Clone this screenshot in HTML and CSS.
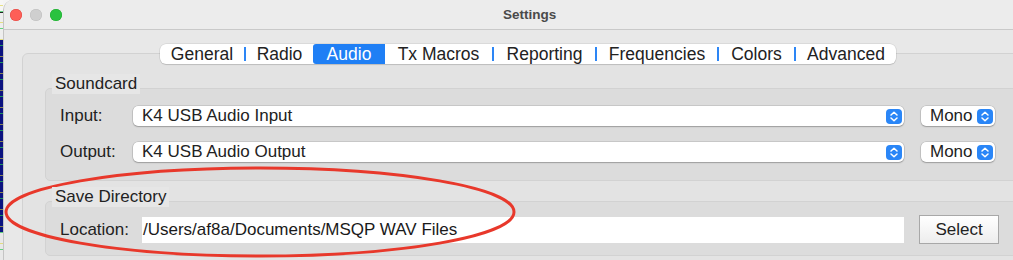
FILE: index.html
```html
<!DOCTYPE html>
<html lang="en">
<head>
  <meta charset="UTF-8">
  <title>Settings</title>
  <link rel="stylesheet" href="styles.css">
</head>
<body>
  <!-- app behind the dialog -->
  <div class="backapp"></div>

  <div class="window">
    <div class="titlebar">
      <span class="light red"></span>
      <span class="light grey"></span>
      <span class="light green"></span>
      <span class="title">Settings</span>
    </div>

    <div class="content">
      <!-- Tabs -->
      <div class="tabs">
        <div class="tab">General</div>
        <div class="tab sep">Radio</div>
        <div class="tab active">Audio</div>
        <div class="tab">Tx Macros</div>
        <div class="tab sep">Reporting</div>
        <div class="tab sep">Frequencies</div>
        <div class="tab sep">Colors</div>
        <div class="tab sep">Advanced</div>
      </div>

      <div class="pane">
        <!-- Soundcard -->
        <div class="group">
          <div class="group-title">Soundcard</div>
          <div class="group-box sound-box">
            <div class="row">
              <span class="label">Input:</span>
              <div class="combo wide">
                <span class="combo-text">K4 USB Audio Input</span>
                <span class="stepper">
                  <svg width="16" height="15" viewBox="0 0 16 15"><path d="M5 6 L8 3.2 L11 6 M5 9 L8 11.8 L11 9" fill="none" stroke="#fff" stroke-width="1.5" stroke-linecap="round" stroke-linejoin="round"/></svg>
                </span>
              </div>
              <div class="combo mono">
                <span class="combo-text">Mono</span>
                <span class="stepper">
                  <svg width="16" height="15" viewBox="0 0 16 15"><path d="M5 6 L8 3.2 L11 6 M5 9 L8 11.8 L11 9" fill="none" stroke="#fff" stroke-width="1.5" stroke-linecap="round" stroke-linejoin="round"/></svg>
                </span>
              </div>
            </div>
            <div class="row">
              <span class="label">Output:</span>
              <div class="combo wide">
                <span class="combo-text">K4 USB Audio Output</span>
                <span class="stepper">
                  <svg width="16" height="15" viewBox="0 0 16 15"><path d="M5 6 L8 3.2 L11 6 M5 9 L8 11.8 L11 9" fill="none" stroke="#fff" stroke-width="1.5" stroke-linecap="round" stroke-linejoin="round"/></svg>
                </span>
              </div>
              <div class="combo mono">
                <span class="combo-text">Mono</span>
                <span class="stepper">
                  <svg width="16" height="15" viewBox="0 0 16 15"><path d="M5 6 L8 3.2 L11 6 M5 9 L8 11.8 L11 9" fill="none" stroke="#fff" stroke-width="1.5" stroke-linecap="round" stroke-linejoin="round"/></svg>
                </span>
              </div>
            </div>
          </div>
        </div>

        <!-- Save Directory -->
        <div class="group save">
          <div class="group-title">Save Directory</div>
          <div class="group-box save-box">
            <div class="row">
              <span class="label loc">Location:</span>
              <div class="field">/Users/af8a/Documents/MSQP WAV Files</div>
              <button class="select-btn">Select</button>
            </div>
          </div>
        </div>
      </div>
    </div>
  </div>

  <!-- red annotation drawn over the screenshot -->
  <svg class="annotation" width="1013" height="260" viewBox="0 0 1013 260">
    <ellipse cx="260" cy="212" rx="254" ry="44" fill="none" stroke="#e8382b" stroke-width="3"/>
  </svg>
</body>
</html>
```

FILE: styles.css
```css
body {
  margin: 0;
  width: 1013px;
  height: 260px;
  overflow: hidden;
  display: flex;
  position: relative;
  background: #f4f4f4;
  font-family: "Liberation Sans", Arial, sans-serif;
  color: #222;
}
.backapp {
  width: 3px;
  flex: none;
  background:
    repeating-linear-gradient(to bottom, transparent 0, transparent 5px, rgba(220, 210, 60, 0.6) 5px, rgba(220, 210, 60, 0.6) 6px, transparent 6px, transparent 11px, rgba(40, 200, 80, 0.7) 11px, rgba(40, 200, 80, 0.7) 12px, transparent 12px, transparent 17px),
    linear-gradient(to bottom, #f6f6f6 0, #f6f6f6 12px, #222 12px, #222 13px, #eeeeee 13px, #eeeeee 40px, #0b1380 40px, #0b1380 232px, #e8e8e8 232px);
}
.window {
  flex: 1;
  background: #e8e8e8;
  border-left: 1px solid #c4c4c4;
  border-top-left-radius: 10px;
  overflow: hidden;
}
.titlebar {
  height: 29px;
  background: #ececec;
  border-bottom: 1px solid #c9c9c9;
  display: flex;
  align-items: center;
  padding-left: 6px;
  gap: 8px;
}
.light {
  width: 12px;
  height: 12px;
  border-radius: 50%;
}
.light.red { background: #fe5f57; box-shadow: inset 0 0 0 0.5px #e0443e; }
.light.grey { background: #cfcfcf; box-shadow: inset 0 0 0 0.5px #bdbdbd; }
.light.green { background: #29c23f; box-shadow: inset 0 0 0 0.5px #1aab29; }
.title {
  margin-left: 433px;
  font-size: 13.5px;
  font-weight: bold;
  color: #4a4a4a;
}
.content {
  padding: 14px 0 0 18px;
}
.tabs {
  position: relative;
  z-index: 1;
  margin-left: 138px;
  display: grid;
  grid-template-columns: 84px 69px 72px 107px 103px 122px 77px 102px;
  width: 736px;
  height: 20px;
  background: #fff;
  border-radius: 6px;
  box-shadow: 0 0 0 0.5px rgba(0, 0, 0, 0.12), 0 1px 1px rgba(0, 0, 0, 0.12);
}
.tab {
  font-size: 17.5px;
  line-height: 20px;
  text-align: center;
  color: #222;
  box-sizing: border-box;
}
.tab.sep {
  border-left: 2px solid transparent;
  border-image: linear-gradient(to bottom, transparent 20%, #2d86f5 20%, #2d86f5 80%, transparent 80%) 1;
}
.tab.active {
  background: #1f7ff5;
  color: #fff;
  border-radius: 3px 0 0 3px;
}
.pane {
  margin-top: -11px;
  margin-right: -30px;
  padding: 20px 22px 0 22px;
  height: 200px;
  background: #e3e3e3;
  border: 1px solid #d2d2d2;
  border-radius: 6px;
}
.group-title {
  width: fit-content;
  position: relative;
  z-index: 1;
  margin-left: 7px;
  margin-bottom: -6px;
  padding: 0 3px;
  font-size: 17px;
  line-height: 20px;
  background: #e6e6e6;
}
.group-box {
  width: 966px;
  background: #dcdcdc;
  border: 1px solid #d2d2d2;
  border-radius: 5px;
}
.sound-box {
  padding: 17px 0 18px 14px;
  height: 56px;
}
.sound-box .row + .row {
  margin-top: 16px;
}
.group.save {
  margin-top: 6px;
}
.save-box {
  padding: 13px 0 10px 14px;
  height: 30px;
}
.row {
  display: flex;
  align-items: center;
}
.label {
  width: 73px;
  flex: none;
  font-size: 17px;
}
.label.loc {
  width: 82px;
}
.combo {
  height: 20px;
  background: #fff;
  border-radius: 5px;
  box-shadow: 0 0 0 0.5px rgba(0, 0, 0, 0.18), 0 1px 1.5px rgba(0, 0, 0, 0.22);
  display: flex;
  align-items: center;
  justify-content: space-between;
}
.combo.wide {
  width: 771px;
  padding-left: 9px;
  box-sizing: border-box;
}
.combo.mono {
  width: 74px;
  margin-left: 17px;
  padding-left: 9px;
  box-sizing: border-box;
}
.combo-text {
  font-size: 17px;
  line-height: 20px;
}
.stepper {
  width: 16px;
  height: 15px;
  margin-right: 2px;
  background: #2a86f7;
  border-radius: 4px;
  display: flex;
}
.field {
  width: 762px;
  height: 26px;
  background: #fff;
  padding-left: 1px;
  box-sizing: border-box;
  font-size: 17px;
  line-height: 26px;
  color: #1a1a1a;
}
.select-btn {
  margin-left: 15px;
  width: 80px;
  height: 29px;
  border: 1px solid #a8a8a8;
  background: linear-gradient(to bottom, #ffffff, #ededed);
  font-family: "Liberation Sans", Arial, sans-serif;
  font-size: 17px;
  color: #222;
  padding: 0;
}
.annotation {
  position: absolute;
  left: 0;
  top: 0;
  pointer-events: none;
}
```
